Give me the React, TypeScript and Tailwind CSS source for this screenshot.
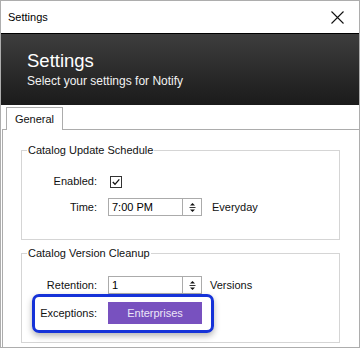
import React from 'react';

const font = { fontFamily: '"Liberation Sans", Arial, sans-serif' };

function Spinner({ value }: { value: string }) {
  return (
    <div className="flex h-[18px] w-[94px] border border-[#ababab] bg-white">
      <div className="flex flex-1 items-center pl-[3px] text-[11px] leading-none text-black">{value}</div>
      <div className="flex w-[19px] flex-col items-center justify-center border-l border-[#ababab]">
        <svg width="9" height="12" viewBox="0 0 9 12">
          <path d="M4.5 2 L7 4.5 L2 4.5 Z" fill="#111" />
          <line x1="1.5" y1="6.5" x2="7.5" y2="6.5" stroke="#333" strokeWidth="1" />
          <path d="M2 8.5 L7 8.5 L4.5 11 Z" fill="#111" />
        </svg>
      </div>
    </div>
  );
}

function Row({ label, children }: { label: string; children: React.ReactNode }) {
  return (
    <div className="flex items-center">
      <div className="w-[75px] text-right text-[11px] text-[#111]">{label}</div>
      <div className="ml-[11px] flex items-center">{children}</div>
    </div>
  );
}

export default function App() {
  return (
    <div style={font} className="flex h-[348px] w-[360px] flex-col overflow-hidden border border-[#adadad] bg-white">
      {/* window title bar */}
      <div className="flex h-[32px] shrink-0 items-center justify-between pl-[7px] pr-[15px] text-[11px] text-black">
        <span>Settings</span>
        <svg width="13" height="13" viewBox="0 0 13 13">
          <path d="M0.5 0.5 L12.5 12.5 M12.5 0.5 L0.5 12.5" stroke="#111" strokeWidth="1.1" />
        </svg>
      </div>

      {/* dark banner */}
      <div className="h-[72px] shrink-0 border-t border-black bg-gradient-to-b from-[#3e3e3e] to-[#1b1b1b] pl-[26px] pt-[16px] text-white">
        <div className="text-[18.5px] leading-[22px]">Settings</div>
        <div className="mt-[2px] text-[12px] leading-[15px] text-[#f2f2f2]">Select your settings for Notify</div>
      </div>

      {/* tabs */}
      <div className="flex shrink-0 pl-[5px] pt-[2px]">
        <div className="relative z-10 -mb-px flex h-[23px] w-[57px] items-center justify-center border-l border-r border-t border-[#acacac] bg-white text-[11px] text-[#111]">
          General
        </div>
      </div>

      <div className="ml-px flex-1 border-l border-t border-[#acacac] pl-[18px]">
        <fieldset className="mt-[14px] h-[96px] w-[319px] border border-[#d5d5d5]">
          <legend className="ml-[5px] px-[1px] text-[11px] leading-[13px] text-[#111]">Catalog Update Schedule</legend>
          <div className="flex flex-col gap-[7px] pt-[16px]">
            <div className="h-[18px]">
              <Row label="Enabled:">
                <div className="ml-[2px] mt-[1px] flex h-[12px] w-[12px] items-center justify-center border border-[#333] bg-white">
                  <svg width="10" height="10" viewBox="0 0 10 10">
                    <path d="M1.8 5 L4 7.3 L8.3 2.3" fill="none" stroke="#111" strokeWidth="1.3" />
                  </svg>
                </div>
              </Row>
            </div>
            <Row label="Time:">
              <Spinner value="7:00 PM" />
              <span className="ml-[10px] text-[11px] text-[#111]">Everyday</span>
            </Row>
          </div>
        </fieldset>

        <fieldset className="mt-[7px] h-[96px] w-[319px] border border-[#d5d5d5]">
          <legend className="ml-[5px] px-[1px] text-[11px] leading-[13px] text-[#111]">Catalog Version Cleanup</legend>
          <div className="flex flex-col gap-[8px] pt-[16px]">
            <Row label="Retention:">
              <Spinner value="1" />
              <span className="ml-[8px] text-[11px] text-[#111]">Versions</span>
            </Row>
            <div className="relative">
              <Row label="Exceptions:">
                <button className="flex h-[22px] w-[94px] items-center justify-center bg-[#7851bf] text-[11px] text-[#ece6f7]">
                  Enterprises
                </button>
              </Row>
              {/* highlight annotation */}
              <div className="pointer-events-none absolute left-[10px] top-[-8px] h-[39px] w-[182px] rounded-[7px] border-[3px] border-[#1532d8] shadow-[0_3px_6px_rgba(0,0,0,0.3)]" />
            </div>
          </div>
        </fieldset>
      </div>
    </div>
  );
}
